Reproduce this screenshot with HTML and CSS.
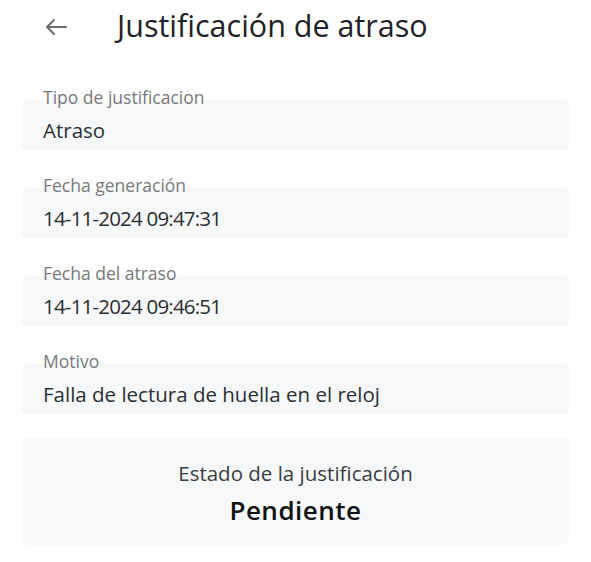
FILE: index.html
```html
<!DOCTYPE html>
<html lang="es">
<head>
<meta charset="utf-8">
<link rel="stylesheet" href="styles.css">
</head>
<body>
<div class="page">
  <header class="header">
    <span class="back">
      <svg width="24" height="18" viewBox="0 0 24 18" fill="none" stroke="#6b6b6b" stroke-width="2" stroke-linecap="round" stroke-linejoin="round"><path d="M22 9H3M10 2L3 9l7 7"/></svg>
    </span>
    <h1 class="title">Justificación de atraso</h1>
  </header>
  <div class="fields">
    <div class="field">
      <div class="label">Tipo de justificacion</div>
      <div class="box">Atraso</div>
    </div>
    <div class="field">
      <div class="label">Fecha generación</div>
      <div class="box box-date">14-11-2024 09:47:31</div>
    </div>
    <div class="field">
      <div class="label">Fecha del atraso</div>
      <div class="box box-date">14-11-2024 09:46:51</div>
    </div>
    <div class="field">
      <div class="label">Motivo</div>
      <div class="box">Falla de lectura de huella en el reloj</div>
    </div>
  </div>
  <div class="status">
    <div class="status-label">Estado de la justificación</div>
    <div class="status-value">Pendiente</div>
  </div>
</div>
</body>
</html>
```
FILE: styles.css
```css
html, body {
  margin: 0;
  padding: 0;
  background: #ffffff;
}
body {
  font-family: "Open Sans", "Noto Sans", sans-serif;
  color: #2b2f33;
}
.page {
  padding: 0 22px;
}
.header {
  display: flex;
  align-items: center;
  height: 54px;
  padding-left: 22px;
}
.back {
  display: flex;
  width: 24px;
  height: 18px;
  margin-right: 49px;
}
.title {
  margin: 0 0 5px;
  font-size: 30.5px;
  line-height: 36px;
  font-weight: 400;
  color: #1f2226;
}
.fields {
  display: flex;
  flex-direction: column;
  gap: 24px;
  margin-top: 33px;
}
.field {
  display: flex;
  flex-direction: column;
}
.label {
  position: relative;
  z-index: 1;
  padding-left: 21px;
  font-size: 17.5px;
  line-height: 20px;
  color: #77797c;
}
.box {
  margin-top: -7px;
  height: 51px;
  box-sizing: border-box;
  padding: 18px 21px 0;
  background: #f7f8fa;
  border-radius: 6px;
  font-size: 20.5px;
  line-height: 24px;
  color: #2b2f33;
}
.box-date {
  letter-spacing: -0.8px;
}
.status {
  margin-top: 23px;
  height: 107px;
  box-sizing: border-box;
  background: #f7f8fa;
  border-radius: 6px;
  display: flex;
  flex-direction: column;
  align-items: center;
  padding-top: 23px;
}
.status-label {
  font-size: 20.5px;
  line-height: 24px;
  color: #3a3d40;
}
.status-value {
  margin-top: 9px;
  font-size: 26px;
  line-height: 32px;
  font-weight: 600;
  color: #111214;
  letter-spacing: 0.5px;
}
```
